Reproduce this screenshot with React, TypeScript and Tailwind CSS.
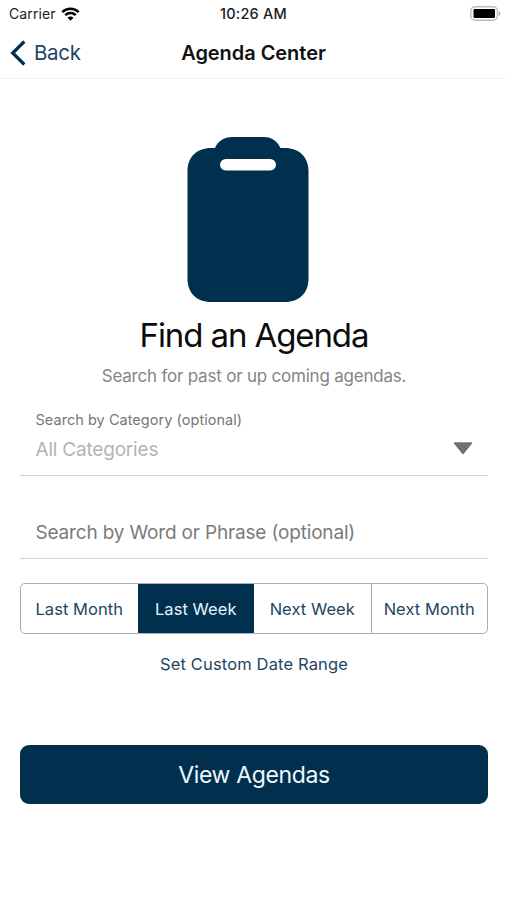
const ranges = ["Last Month", "Last Week", "Next Week", "Next Month"];

function StatusBar() {
  return (
    <div className="grid h-[27px] grid-cols-3 items-center text-[14px] leading-none text-[#1c1c1c]">
      <div className="flex items-center gap-1.5 pl-[9px]">
        <span className="pt-px tracking-[0.1px]">Carrier</span>
        <svg className="-ml-px h-[14px] w-[19px]" viewBox="0 0 19 14" fill="none" stroke="#000">
          <path d="M1.3 5.2C5.9.7 13.1.7 17.7 5.2" strokeWidth="2.5" />
          <path d="M4.3 8.2c2.9-2.8 7.5-2.8 10.4 0" strokeWidth="2.5" />
          <path d="M9.5 13.7 6.5 10.7c1.7-1.6 4.3-1.6 6 0Z" fill="#000" stroke="none" />
        </svg>
      </div>
      <span className="pt-px text-center text-[14.5px] font-medium tracking-[0.25px]">10:26 AM</span>
      <div className="flex justify-end pr-[6px]">
        <svg className="h-[15px] w-[31px]" viewBox="0 0 31 15">
          <rect x="0.8" y="0.8" width="26.6" height="13.4" rx="4.2" fill="#fff" stroke="#bdbdbd" strokeWidth="1.4" />
          <rect x="3.500" y="3" width="21.500" height="9" rx="1" fill="#000" />
          <path d="M28.6 5.2c2.4.8 2.4 3.8 0 4.6Z" fill="#aaa" />
        </svg>
      </div>
    </div>
  );
}

function NavBar() {
  return (
    <header className="grid h-[52px] grid-cols-[1fr_auto_1fr] items-center border-b border-[#f0f0f0]">
      <button className="flex items-center gap-2 pl-[10px] text-[20.5px] tracking-[-0.3px] text-[#1d4665]">
        <svg className="h-[26px] w-[16px]" viewBox="0 0 16 26" fill="none" stroke="#00304d" strokeWidth="3.2">
          <path d="M14.3 1.5 2.7 13l11.6 11.5" />
        </svg>
        <span className="pt-[2px]">Back</span>
      </button>
      <h1 className="text-[20px] font-semibold tracking-[-0.05px] text-[#111]">Agenda Center</h1>
    </header>
  );
}

export default function App() {
  return (
    <div className="flex h-[900px] w-[507px] flex-col bg-white font-['Inter',sans-serif]">
      <StatusBar />
      <NavBar />
      <main className="flex flex-col pt-[57px] pr-[19px] pl-[20px]">
        <svg className="ml-[167px] h-[167px] w-[122px]" viewBox="0 0 122 167">
          <path
            fill="#00304d"
            d="M28 12C31 5 37 1 45 1H77C85 1 90 5 93.500 12H98C112 12 121.500 21 121.500 35V143C121.500 157 112 166 98 166H24C10 166 .5 157 .5 143V35C.5 21 10 12 24 12Z"
          />
          <rect x="33" y="23" width="56" height="11.500" rx="5.750" fill="#fff" />
        </svg>
        <h2 className="mt-[12px] text-center text-[33px] leading-[40px] tracking-[-1.1px] text-[#0b0b0b]">Find an Agenda</h2>
        <p className="mt-[9px] text-center text-[17px] leading-[24px] tracking-[-0.21px] text-[#858585]">
          Search for past or up coming agendas.
        </p>

        <div className="mt-[20px] flex h-[68px] items-end justify-between border-b border-[#d4d4d4] pr-[15px] pl-[15.5px]">
          <div className="flex h-full flex-col">
            <label className="mt-[3px] text-[14.5px] leading-[18px] tracking-[0.04px] text-[#777]">
              Search by Category (optional)
            </label>
            <span className="mt-[8px] text-[19px] leading-[26px] tracking-[-0.2px] text-[#b4b4b4]">All Categories</span>
          </div>
          <svg className="mb-[20px] h-[13px] w-[20px]" viewBox="0 0 20 13">
            <path d="M1.500 1H18.500L10 11.500Z" fill="#707070" stroke="#707070" strokeWidth="1.500" strokeLinejoin="round" />
          </svg>
        </div>

        <div className="mt-[43px] flex h-[40px] items-start border-b border-[#d4d4d4] px-[15.5px]">
          <span className="text-[19px] leading-[28px] tracking-[-0.17px] text-[#7b7b7b]">
            Search by Word or Phrase (optional)
          </span>
        </div>

        <div className="mt-[24px] grid h-[51px] grid-cols-4 overflow-hidden rounded-[5px] border border-[#9fb2be] text-[16.5px] tracking-[0.05px] text-[#1d4663]">
          {ranges.map((label, i) => (
            <button
              key={label}
              className={
                i === 1
                  ? "bg-[#00304d] pt-[2px] text-[#e8f3fb]"
                  : i === 3
                    ? "border-l border-[#9fb2be] pt-[2px]"
                    : "pt-[2px]"
              }
            >
              {label}
            </button>
          ))}
        </div>
        <button className="mt-[18px] text-[16.5px] leading-[24px] tracking-[0.15px] text-[#1d4663]">
          Set Custom Date Range
        </button>

        <button className="mt-[69px] h-[59px] rounded-[9px] bg-[#00304d] pt-[2px] text-[23px] tracking-[-0.35px] text-[#f0f8ff]">
          View Agendas
        </button>
      </main>
    </div>
  );
}
